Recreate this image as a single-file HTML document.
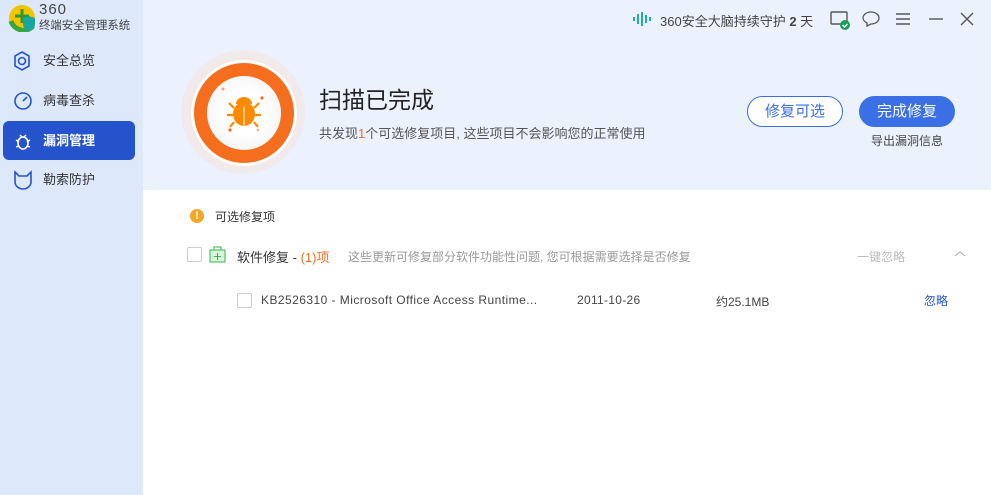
<!DOCTYPE html>
<html><head><meta charset="utf-8"><style>
*{margin:0;padding:0;box-sizing:border-box}
body{width:991px;height:495px;overflow:hidden;font-family:"Liberation Sans","Noto Sans CJK SC",sans-serif;background:#fff;position:relative;color:#333}
.side{position:absolute;left:0;top:0;width:143px;height:495px;background:#dde9fb}
.top{position:absolute;left:143px;top:0;width:848px;height:190px;background:#ebf2fd}
.abs{position:absolute;white-space:nowrap}
.nav{position:absolute;left:3px;width:132px;height:39px;font-size:13px;color:#333;padding-left:40px;line-height:39px;border-radius:6px}
.nav.on{background:#2553cc;color:#fff;font-weight:bold}
.cb{position:absolute;width:15px;height:15px;border:1px solid #ccc;border-radius:2px;background:#fff}
</style></head><body>
<div class="side"></div>
<div class="top"></div>
<!-- logo -->
<svg class="abs" style="left:8px;top:4px" width="30" height="28" viewBox="0 0 30 28"><circle cx="14" cy="14" r="13" fill="#f5c400"/><path d="M3 17a13 13 0 0 0 22 5" stroke="#3aa53a" stroke-width="5" fill="none"/><path d="M14 5v14M7 12h14" stroke="#2d9a2d" stroke-width="3"/><path d="M21 12l6 2v6c0 4-3 6-6 7-3-1-6-3-6-7v-6z" fill="#1aa6a0"/></svg>
<div class="abs" style="left:39px;top:1px;font-size:15px;color:#444;letter-spacing:1px">360</div>
<div class="abs" style="left:39px;top:17px;font-size:11.4px;color:#444">终端安全管理系统</div>
<div class="nav" style="top:41px">安全总览</div>
<div class="nav" style="top:81px">病毒查杀</div>
<div class="nav on" style="top:121px">漏洞管理</div>
<div class="nav" style="top:160px">勒索防护</div>
<svg class="abs" style="left:13px;top:51px" width="18" height="20"><path d="M9 1l7 4v10l-7 4-7-4V5z" fill="none" stroke="#2553cc" stroke-width="1.6"/><circle cx="9" cy="10" r="3.5" fill="none" stroke="#2553cc" stroke-width="1.6"/></svg>
<svg class="abs" style="left:13px;top:91px" width="20" height="20"><circle cx="10" cy="10" r="8" fill="none" stroke="#2553cc" stroke-width="1.6"/><path d="M10 10l4-4" stroke="#2553cc" stroke-width="1.6"/></svg>
<svg class="abs" style="left:13px;top:131px" width="20" height="20"><ellipse cx="10" cy="12" rx="5" ry="6" fill="none" stroke="#fff" stroke-width="1.6"/><path d="M3 9l3 2M17 9l-3 2M3 16l3-1M17 16l-3-1M7 4l2 2M13 4l-2 2" stroke="#fff" stroke-width="1.4"/></svg>
<svg class="abs" style="left:13px;top:170px" width="20" height="20"><path d="M2 2l4 4h8l4-4v10c0 4-4 7-8 7s-8-3-8-7z" fill="none" stroke="#2553cc" stroke-width="1.6"/></svg>
<!-- top right -->
<svg class="abs" style="left:632px;top:11px" width="20" height="16"><path d="M2 6v4M6 3v10M10 1v14M14 4v8M18 6v4" stroke="#22b09a" stroke-width="2"/></svg>
<div class="abs" style="left:660px;top:11px;font-size:13px;color:#444">360安全大脑持续守护 <b>2</b> 天</div>
<svg class="abs" style="left:830px;top:10px" width="22" height="22"><rect x="1" y="2" width="16" height="12" rx="1" fill="none" stroke="#555" stroke-width="1.4"/><circle cx="15" cy="15" r="5" fill="#18a058"/><path d="M12.5 15l2 2 3-3" stroke="#fff" stroke-width="1.4" fill="none"/></svg>
<svg class="abs" style="left:862px;top:11px" width="18" height="16"><path d="M9 1c4.5 0 8 2.7 8 6s-3.5 6-8 6l-4 2v-3c-2-1-4-3-4-5 0-3.3 3.5-6 8-6z" fill="none" stroke="#555" stroke-width="1.3"/></svg>
<svg class="abs" style="left:895px;top:12px" width="16" height="14"><path d="M1 2h14M1 7h14M1 12h14" stroke="#555" stroke-width="1.4"/></svg>
<svg class="abs" style="left:928px;top:12px" width="16" height="14"><path d="M1 7h14" stroke="#555" stroke-width="1.4"/></svg>
<svg class="abs" style="left:960px;top:12px" width="14" height="14"><path d="M1 1l12 12M13 1L1 13" stroke="#555" stroke-width="1.4"/></svg>
<!-- scan badge -->
<div class="abs" style="left:181px;top:50px;width:124px;height:124px;border-radius:50%;background:radial-gradient(circle,#f5e6e0 50%,#f0ebf0 72%,rgba(235,242,253,0) 100%)"></div>
<div class="abs" style="left:191px;top:60px;width:106px;height:106px;border-radius:50%;background:#f56e1e;border:3px solid #fff"></div>
<div class="abs" style="left:207px;top:76px;width:74px;height:74px;border-radius:50%;background:radial-gradient(circle,#fff 40%,#f0eeee 100%)"></div>
<svg class="abs" style="left:218px;top:84px" width="52" height="56" viewBox="0 0 52 56"><ellipse cx="26" cy="30" rx="11" ry="12" fill="#ff8a00"/><path d="M18 20a8 7 0 0 1 16 0z" fill="#ff8a00"/><path d="M16 24l-5-5M36 24l5-5M15 31H9M37 31h6M16 38l-4 5M36 38l4 5" stroke="#ff8a00" stroke-width="2.2"/><path d="M26 22v20" stroke="#fff" stroke-width="1"/><circle cx="5" cy="5" r="1.5" fill="#f5a07a"/><circle cx="44" cy="14" r="1.6" fill="#f56e1e"/><circle cx="12" cy="46" r="1.6" fill="#f56e1e"/><circle cx="40" cy="46" r="1.4" fill="#f5b59a"/></svg>
<div class="abs" style="left:319px;top:81px;font-size:23px;color:#222">扫描已完成</div>
<div class="abs" style="left:319px;top:123px;font-size:13px;color:#555">共发现<span style="color:#f56e1e">1</span>个可选修复项目, 这些项目不会影响您的正常使用</div>
<div class="abs" style="left:747px;top:96px;width:96px;height:31px;border:1px solid #3b6fe0;border-radius:16px;background:#fff;color:#3b6fe0;font-size:15px;text-align:center;line-height:29px">修复可选</div>
<div class="abs" style="left:859px;top:96px;width:96px;height:31px;border-radius:16px;background:#3a6fe6;color:#fff;font-size:15px;text-align:center;line-height:31px">完成修复</div>
<div class="abs" style="left:871px;top:132px;font-size:12px;color:#444">导出漏洞信息</div>
<!-- list -->
<div class="abs" style="left:190px;top:209px;width:14px;height:14px;border-radius:50%;background:#f5a623;color:#fff;font-size:11px;font-weight:bold;text-align:center;line-height:14px">!</div>
<div class="abs" style="left:215px;top:208px;font-size:12px;color:#333">可选修复项</div>
<div class="cb" style="left:187px;top:247px"></div>
<svg class="abs" style="left:209px;top:246px" width="17" height="17"><rect x="1" y="4" width="15" height="12" fill="#d9f5dc" stroke="#39b54a"/><path d="M5 4V1h7v3M8.5 7v7M5 10.5h7" stroke="#39b54a" fill="none"/></svg>
<div class="abs" style="left:237px;top:247px;font-size:13px;color:#333">软件修复 - <span style="color:#f56e1e">(1)项</span></div>
<div class="abs" style="left:348px;top:248px;font-size:12px;color:#999">这些更新可修复部分软件功能性问题, 您可根据需要选择是否修复</div>
<div class="abs" style="left:857px;top:248px;font-size:12px;color:#bbb">一键忽略</div>
<svg class="abs" style="left:954px;top:250px" width="12" height="8"><path d="M1 6l5-4 5 4" stroke="#aaa" fill="none"/></svg>
<div class="cb" style="left:237px;top:293px"></div>
<div class="abs" style="left:261px;top:293px;font-size:12px;color:#444;letter-spacing:.45px">KB2526310 - Microsoft Office Access Runtime...</div>
<div class="abs" style="left:577px;top:293px;font-size:12px;color:#444;letter-spacing:.3px">2011-10-26</div>
<div class="abs" style="left:716px;top:293px;font-size:12px;color:#444">约25.1MB</div>
<div class="abs" style="left:924px;top:292px;font-size:12px;color:#2553cc">忽略</div>
</body></html>
